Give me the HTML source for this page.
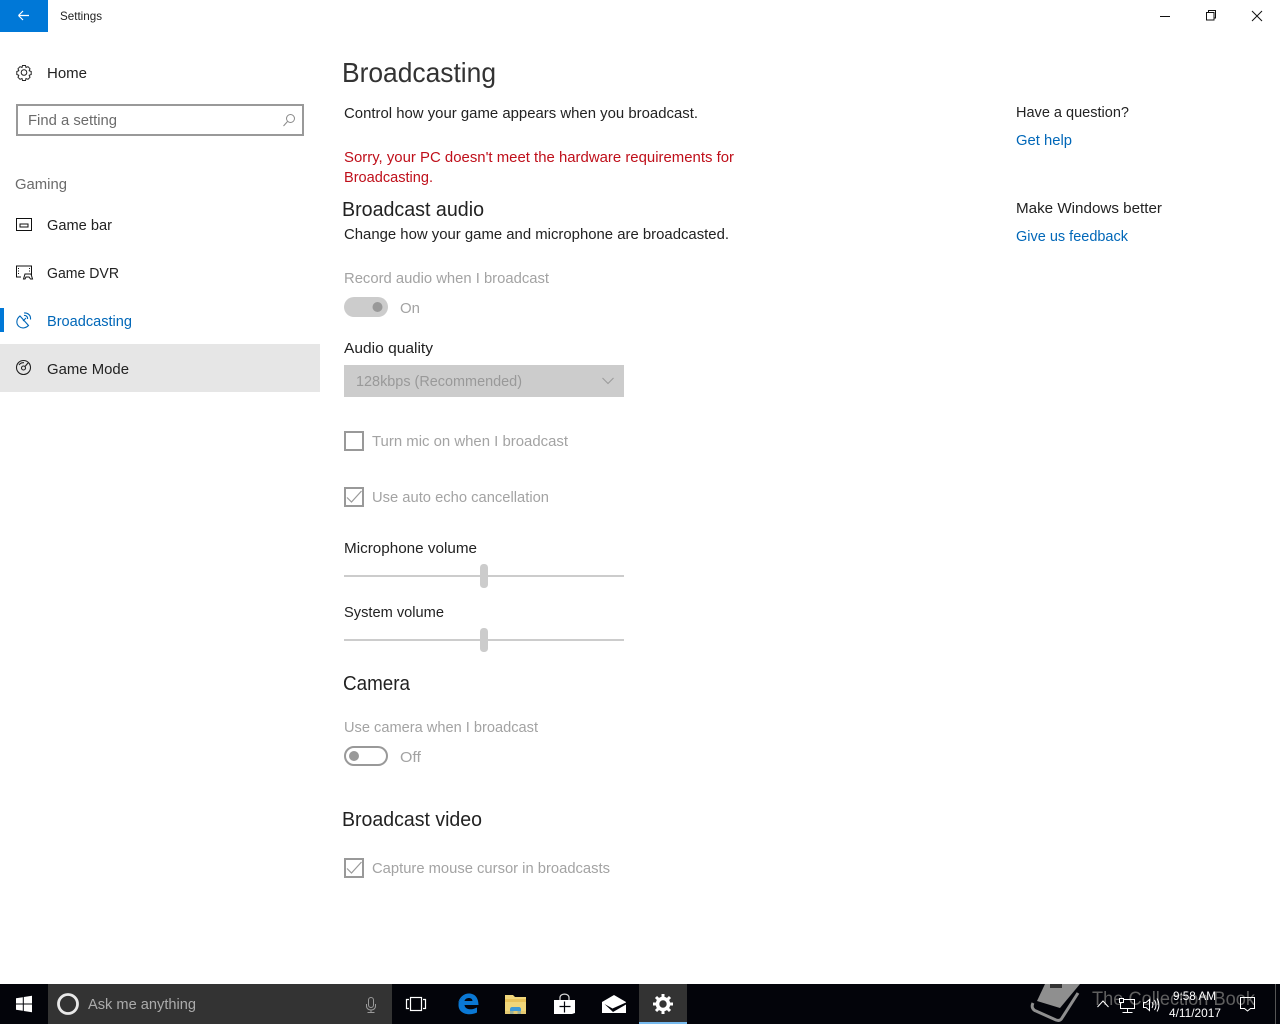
<!DOCTYPE html>
<html lang="en">
<head>
<meta charset="utf-8">
<title>Settings</title>
<style>
html,body{margin:0;padding:0;background:#fff;width:1280px;height:1024px;overflow:hidden}
svg{display:block}
text{font-family:"Liberation Sans",sans-serif;font-size:15px;fill:#222}
.g{fill:#a3a3a3}
.r{fill:#bf0f1a}
.l{fill:#0067b8}
.h{font-size:20px}
</style>
</head>
<body>
<svg width="1280" height="1024" viewBox="0 0 1280 1024" xmlns="http://www.w3.org/2000/svg">
<rect width="1280" height="1024" fill="#fff"/>
<!-- title bar -->
<rect width="48" height="32" fill="#0078d7"/>
<path d="M18.5 15.500H29M18.500 15.500L23 11M18.500 15.500L23 20" fill="none" stroke="#fff" stroke-width="1.200"/>
<text x="60" y="20" style="font-size:12px" textLength="42" lengthAdjust="spacingAndGlyphs">Settings</text>
<path d="M1160 16.500H1170" stroke="#111" stroke-width="1"/>
<path d="M1206.500 12.500h7.500v7.500h-7.500zM1208.500 12.500v-2h7v7.500h-2" fill="none" stroke="#111" stroke-width="1"/>
<path d="M1252 11L1262 21M1262 11L1252 21" stroke="#111" stroke-width="1"/>

<!-- sidebar -->
<g fill="none" stroke="#222" stroke-width="1">
<circle cx="24" cy="72.500" r="2.800"/>
<path d="M22.500 65.500h3l.5 2 2-.8 2 2-.8 2 2 .8v3l-2 .8.800 2-2 2-2-.8-.5 2h-3l-.5-2-2 .8-2-2 .8-2-2-.8v-3l2-.8-.8-2 2-2 2 .8z"/>
</g>
<text x="47" y="78" textLength="40" lengthAdjust="spacingAndGlyphs">Home</text>
<rect x="17" y="105" width="286" height="30" fill="#fff" stroke="#999" stroke-width="2"/>
<text x="28" y="125" style="fill:#6b6b6b" textLength="89" lengthAdjust="spacingAndGlyphs">Find a setting</text>
<g fill="none" stroke="#8a8a8a" stroke-width="1"><circle cx="290.500" cy="118.500" r="4"/><path d="M287.500 121.500L283.500 126"/></g>
<text x="15" y="189" style="fill:#6b6b6b" textLength="52" lengthAdjust="spacingAndGlyphs">Gaming</text>

<rect x="16.500" y="218.500" width="15" height="12" fill="none" stroke="#111" stroke-width="1"/>
<rect x="20" y="224" width="8" height="3" fill="none" stroke="#111" stroke-width="1"/>
<text x="47" y="230" textLength="65" lengthAdjust="spacingAndGlyphs">Game bar</text>

<path d="M21 277h-4.500v-11h15v9" fill="none" stroke="#111" stroke-width="1"/>
<path d="M18 268.500h1M18 271h1M18 273.500h1M29 268.500h1M29 271h1" stroke="#111" stroke-width="1"/>
<path d="M23.500 279l1.500-5h6l1.500 5-2 0-1.500-2h-3l-1 2z" fill="none" stroke="#111" stroke-width="1"/>
<text x="47" y="278" textLength="72" lengthAdjust="spacingAndGlyphs">Game DVR</text>

<rect x="0" y="308" width="4" height="24" fill="#0078d7"/>
<g fill="none" stroke="#0067b8" stroke-width="1.100">
<path d="M20 316c-4 3-4 8-1 10.500s7 1.500 9.500-1z"/>
<path d="M23 321l3-3"/>
<path d="M24 315.500c2-.5 4 1.500 3.500 3.500M24 313c4-.5 7 2.500 6.500 6.500"/>
</g>
<text x="47" y="326" class="l" textLength="85" lengthAdjust="spacingAndGlyphs">Broadcasting</text>

<rect x="0" y="344" width="320" height="48" fill="#e6e6e6"/>
<g fill="none" stroke="#222" stroke-width="1.100">
<circle cx="23.500" cy="367.500" r="7"/>
<circle cx="23.500" cy="368" r="2"/>
<path d="M25 366.500l3-3.500M19 365c1-1.500 3-2.500 5-2.300"/>
</g>
<text x="47" y="374" textLength="82" lengthAdjust="spacingAndGlyphs">Game Mode</text>

<!-- main -->
<text x="342" y="82" style="font-size:28px;fill:#333" textLength="154" lengthAdjust="spacingAndGlyphs">Broadcasting</text>
<text x="344" y="118" textLength="354" lengthAdjust="spacingAndGlyphs">Control how your game appears when you broadcast.</text>
<text x="344" y="162" class="r" textLength="390" lengthAdjust="spacingAndGlyphs">Sorry, your PC doesn't meet the hardware requirements for</text>
<text x="344" y="182" class="r" textLength="89" lengthAdjust="spacingAndGlyphs">Broadcasting.</text>
<text x="342" y="216" class="h" textLength="142" lengthAdjust="spacingAndGlyphs">Broadcast audio</text>
<text x="344" y="239" textLength="385" lengthAdjust="spacingAndGlyphs">Change how your game and microphone are broadcasted.</text>

<text x="344" y="283" class="g" textLength="205" lengthAdjust="spacingAndGlyphs">Record audio when I broadcast</text>
<rect x="344" y="297" width="44" height="20" rx="10" fill="#ccc"/>
<circle cx="377.500" cy="307" r="5" fill="#999"/>
<text x="400" y="313" class="g" textLength="20" lengthAdjust="spacingAndGlyphs">On</text>

<text x="344" y="353" textLength="89" lengthAdjust="spacingAndGlyphs">Audio quality</text>
<rect x="344" y="365" width="280" height="32" fill="#ccc"/>
<text x="356" y="386" style="fill:#999" textLength="166" lengthAdjust="spacingAndGlyphs">128kbps (Recommended)</text>
<path d="M602.500 378l5.500 5.500 5.500-5.500" fill="none" stroke="#999" stroke-width="1"/>

<rect x="345" y="432" width="18" height="18" fill="none" stroke="#999" stroke-width="2"/>
<text x="372" y="446" class="g" textLength="196" lengthAdjust="spacingAndGlyphs">Turn mic on when I broadcast</text>
<rect x="345" y="488" width="18" height="18" fill="none" stroke="#999" stroke-width="2"/>
<path d="M347 497.500l4.500 4.500 10-11" fill="none" stroke="#999" stroke-width="1.200"/>
<text x="372" y="502" class="g" textLength="177" lengthAdjust="spacingAndGlyphs">Use auto echo cancellation</text>

<text x="344" y="553" textLength="133" lengthAdjust="spacingAndGlyphs">Microphone volume</text>
<rect x="344" y="575" width="280" height="2" fill="#ccc"/>
<rect x="480" y="564" width="8" height="24" rx="3.500" fill="#ccc"/>
<text x="344" y="617" textLength="100" lengthAdjust="spacingAndGlyphs">System volume</text>
<rect x="344" y="639" width="280" height="2" fill="#ccc"/>
<rect x="480" y="628" width="8" height="24" rx="3.500" fill="#ccc"/>

<text x="343" y="690" class="h" textLength="67" lengthAdjust="spacingAndGlyphs">Camera</text>
<text x="344" y="732" class="g" textLength="194" lengthAdjust="spacingAndGlyphs">Use camera when I broadcast</text>
<rect x="345" y="747" width="42" height="18" rx="9" fill="none" stroke="#999" stroke-width="2"/>
<circle cx="354" cy="756" r="5" fill="#999"/>
<text x="400" y="762" class="g" textLength="21" lengthAdjust="spacingAndGlyphs">Off</text>

<text x="342" y="826" class="h" textLength="140" lengthAdjust="spacingAndGlyphs">Broadcast video</text>
<rect x="345" y="859" width="18" height="18" fill="none" stroke="#999" stroke-width="2"/>
<path d="M347 868.500l4.500 4.500 10-11" fill="none" stroke="#999" stroke-width="1.200"/>
<text x="372" y="873" class="g" textLength="238" lengthAdjust="spacingAndGlyphs">Capture mouse cursor in broadcasts</text>

<!-- right column -->
<text x="1016" y="117" textLength="113" lengthAdjust="spacingAndGlyphs">Have a question?</text>
<text x="1016" y="145" class="l" textLength="56" lengthAdjust="spacingAndGlyphs">Get help</text>
<text x="1016" y="213" textLength="146" lengthAdjust="spacingAndGlyphs">Make Windows better</text>
<text x="1016" y="241" class="l" textLength="112" lengthAdjust="spacingAndGlyphs">Give us feedback</text>

<!-- taskbar -->
<rect x="0" y="984" width="1280" height="40" fill="#03040a"/>
<path d="M16 998.200l6.800-1v6.300H16zM23.800 997l8.200-1.200v7.700h-8.200zM16 1004.500h6.800v6.300l-6.800-1zM23.800 1004.500H32v7.700l-8.200-1.200z" fill="#fff"/>
<rect x="48" y="984" width="344" height="40" fill="#333"/>
<circle cx="68" cy="1004" r="9.500" fill="none" stroke="#e8e8e8" stroke-width="2.800"/>
<text x="88" y="1009" style="fill:#ababab" textLength="108" lengthAdjust="spacingAndGlyphs">Ask me anything</text>
<g fill="none" stroke="#9a9a9a" stroke-width="1">
<rect x="368.500" y="997.500" width="5" height="10" rx="2.500"/>
<path d="M366.500 1004v2c0 2.500 2 4 4.500 4s4.500-1.500 4.500-4v-2M371 1010v2.500M367.500 1012.500h7"/>
</g>
<g fill="none" stroke="#fff" stroke-width="1.200">
<rect x="410.500" y="997.500" width="11" height="13"/>
<path d="M409 999.500h-2.500v9h2.500M423 999.500h2.500v9H423"/>
</g>
<!-- edge -->
<path d="M458 1004c1-7 6-10.500 11-10.500 6 0 9.500 4.500 9.500 11.500h-14c.3 4 6 6 12.500 2.500v5c-7 3.500-18.500 2-18.500-7.500 0-3.500 2-6 5-8-2.500 1.500-4.500 4-5.500 7zM464.500 1001h8c0-4-7-4-8 0z" fill="#0a78d4" fill-rule="evenodd"/>
<!-- folder -->
<path d="M505 995h8l2 2h11v17h-21z" fill="#f0d67a"/>
<path d="M505 999h21v3h-21z" fill="#e8c25a"/>
<path d="M510 1014v-5c0-1 1-2 2-2h7c1 0 2 1 2 2v5h-3.500v-3h-4v3z" fill="#3f9bd8"/>
<rect x="505" y="1011" width="21" height="3" fill="#dcc06a" opacity=".6"/>
<!-- store -->
<path d="M554 1000h21v13l-3 1h-18z" fill="#fff"/>
<path d="M560 1000v-2.500c0-4.500 9-4.500 9 0v2.500" fill="none" stroke="#ddd" stroke-width="1.200"/>
<path d="M559.500 1006.500h11M564.500 1001.500v11" stroke="#03040a" stroke-width="1.200"/>
<!-- mail -->
<path d="M602 1002l12-7 12 7v11h-24z" fill="#fff"/>
<path d="M604.500 1004l8 4.500 13.500-6v2l-13 7.500z" fill="#03040a"/>
<!-- settings -->
<rect x="639" y="984" width="48" height="40" fill="#333"/>
<rect x="639" y="1022" width="48" height="2" fill="#76b9ed"/>
<circle cx="663" cy="1004" r="5.500" fill="none" stroke="#fff" stroke-width="3.600"/>
<path d="M663 994v4M663 1010v4M653 1004h4M669 1004h4M656 997l2.800 2.800M667.200 1008.200l2.800 2.800M670 997l-2.800 2.800M658.800 1008.200L656 1011" stroke="#fff" stroke-width="3"/>
<!-- watermark -->
<path d="M1045 984h35l-20 24-23-7z" fill="#8f8f8f"/>
<path d="M1033 1003c-2 4 0 7 3 8l20 9c3 1 5 0 6-2l16-25" fill="none" stroke="#8f8f8f" stroke-width="3"/>
<rect x="1050" y="984" width="12" height="4" fill="#333"/>
<text x="1092" y="1005" style="font-size:19px;fill:#5f5f5f" textLength="163" lengthAdjust="spacingAndGlyphs">The Collection Book</text>
<!-- tray -->
<path d="M1097.500 1007l5.500-6 5.500 6" fill="none" stroke="#fff" stroke-width="1"/>
<g fill="none" stroke="#fff" stroke-width="1">
<rect x="1120.500" y="999.500" width="14" height="9"/>
<path d="M1127.500 1009v3M1122.500 1012.500h10"/>
<rect x="1119.500" y="998.500" width="4" height="4" fill="#03040a"/>
<path d="M1143.500 1002.500h2.500l3.500-3v11l-3.500-3h-2.500zM1152 1002c1 1.500 1 4 0 6M1154.500 1000c2 3 2 7 0 10M1157 998.500c2.500 4 2.500 9 0 13"/>
<path d="M1240.500 997.500h14v11h-4l-3 2.500-3-2.500h-4z"/>
</g>
<text x="1173" y="1000" style="font-size:12px;fill:#fff" textLength="43" lengthAdjust="spacingAndGlyphs">9:58 AM</text>
<text x="1169" y="1017" style="font-size:12px;fill:#fff" textLength="52" lengthAdjust="spacingAndGlyphs">4/11/2017</text>
<rect x="1275" y="984" width="1" height="40" fill="#555"/>
</svg>
</body>
</html>
